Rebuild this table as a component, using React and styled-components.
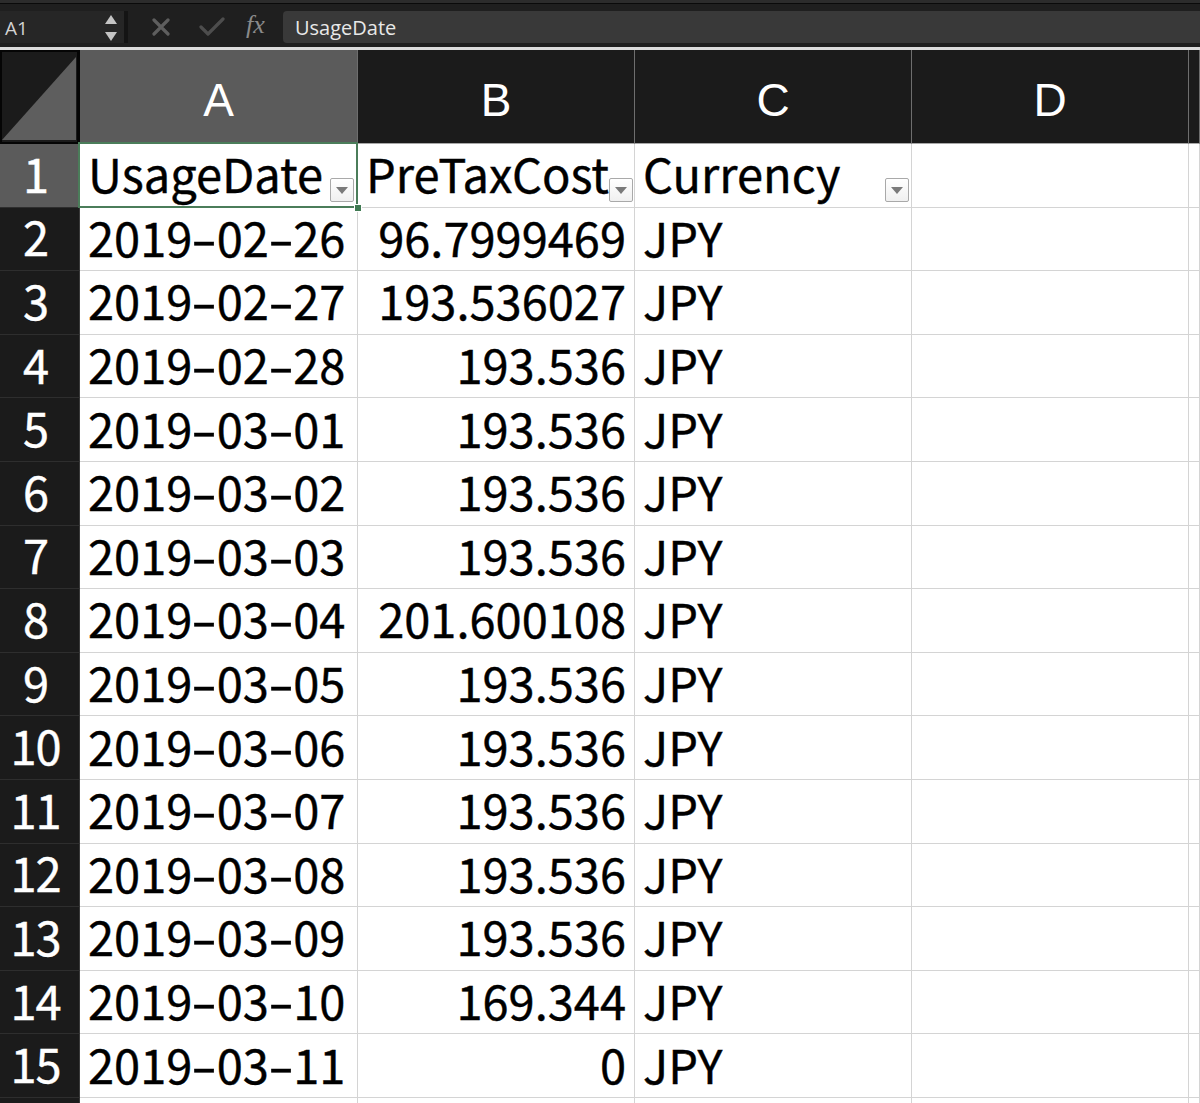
import React from 'react';
import styled, { createGlobalStyle, css } from 'styled-components';

const GlobalStyle = createGlobalStyle`
  html, body {
    margin: 0;
    padding: 0;
    background: #1b1b1b;
    overflow: hidden;
  }
  * {
    box-sizing: border-box;
  }
`;

const Page = styled.div`
  width: 1200px;
  height: 1103px;
  display: flex;
  flex-direction: column;
  overflow: hidden;
  background: #1b1b1b;

  & > * {
    flex-shrink: 0;
  }
`;

const TopStrip = styled.div`
  height: 4px;
  background: #2c2c2c;
  border-bottom: 1px solid #0a0a0a;
`;

const FormulaBar = styled.div`
  height: 43px;
  display: flex;
  align-items: stretch;
  padding: 7px 0 4px;
  background: #1f1f1f;
`;

const NameBox = styled.div`
  width: 124px;
  display: flex;
  align-items: center;
  justify-content: space-between;
  padding: 2px 6px 0 5px;
  background: #262626;
  color: #d2d2d2;
  font-family: 'Open Sans', 'Noto Sans', sans-serif;
  font-size: 19px;
`;

const Divider = styled.div`
  width: 4px;
  background: #141414;
`;

const Tools = styled.div`
  width: 155px;
  display: flex;
  align-items: center;
  padding-left: 24px;
`;

const ToolIcon = styled.span`
  width: 47px;
  display: flex;
  align-items: center;
  justify-content: flex-start;
`;

const Fx = styled.span`
  font-family: 'Liberation Serif', serif;
  font-style: italic;
  font-size: 26px;
  color: #8a8a8a;
  margin-top: -4px;
`;

const FormulaInput = styled.div`
  flex: 1;
  display: flex;
  align-items: center;
  padding-left: 12px;
  background: #393939;
  border-radius: 4px 0 0 4px;
  color: #e8e8e8;
  font-family: 'Open Sans', 'Noto Sans', sans-serif;
  font-size: 20px;
`;

const BarEdge = styled.div`
  height: 3px;
  background: #dcdcdc;
`;

const Sheet = styled.div`
  display: grid;
  grid-template-columns: 80px 278px 277px 277px 277px 1fr;
  grid-template-rows: 94px repeat(16, 63.6px);
`;

const cellFont = css`
  font-family: 'Noto Sans CJK JP', 'Noto Sans', sans-serif;
  line-height: 1;
  -webkit-text-stroke: 0.4px currentColor;
`;

const Corner = styled.div`
  background: #1b1b1b;
  border: 2px solid #050505;
  border-right-width: 3px;
  display: flex;

  svg {
    width: 100%;
    height: 100%;
  }
`;

const ColHeader = styled.div`
  display: flex;
  align-items: center;
  justify-content: center;
  padding-top: 6px;
  background: ${(p) => (p.$selected ? '#5b5b5b' : '#1b1b1b')};
  border-right: 1px solid #6e6e6e;
  border-bottom: 1px solid #a8a8a8;
  color: #ffffff;
  font-family: 'Liberation Sans', Arial, sans-serif;
  font-size: 46px;
`;

const RowHeader = styled.div`
  ${cellFont};
  display: flex;
  align-items: center;
  justify-content: center;
  padding: 0 8px 6px 0;
  background: ${(p) => (p.$selected ? '#5b5b5b' : '#1b1b1b')};
  border-right: 1px solid #3a3a3a;
  border-bottom: 1px solid #2e2e2e;
  color: #ffffff;
  font-size: 47px;
  letter-spacing: -1px;
`;

const Cell = styled.div`
  ${cellFont};
  position: relative;
  display: flex;
  align-items: center;
  justify-content: ${(p) => (p.$right ? 'flex-end' : 'flex-start')};
  padding: 0 ${(p) => (p.$right ? '8px' : '0')} 5px ${(p) => (p.$right ? '0' : '8px')};
  background: #ffffff;
  border-right: 1px solid #d4d4d4;
  border-bottom: 1px solid #d4d4d4;
  color: #000000;
  font-size: 47px;
  white-space: nowrap;

  ${(p) =>
    p.$active &&
    css`
      &::after {
        content: '';
        position: absolute;
        left: -2px;
        top: -2px;
        right: -1px;
        bottom: -1px;
        border: 2px solid #4b7d5a;
        pointer-events: none;
      }
    `}
`;

const Dash = styled.span`
  display: inline-block;
  padding: 0 4px;
  transform: scaleX(1.6);
`;

const FillHandle = styled.span`
  position: absolute;
  right: -5px;
  bottom: -5px;
  width: 8px;
  height: 8px;
  background: #3f7a52;
  border: 1px solid #ffffff;
  z-index: 2;
`;

const FilterButton = styled.span`
  position: absolute;
  right: ${(p) => p.$right}px;
  bottom: 5px;
  width: 24px;
  height: 24px;
  display: flex;
  align-items: center;
  justify-content: center;
  background: linear-gradient(#ffffff, #f0f0f0);
  border: 1px solid #a9a9a9;
  border-radius: 2px;
  z-index: 1;

  &::before {
    content: '';
    width: 0;
    height: 0;
    margin-top: 2px;
    border-left: 6px solid transparent;
    border-right: 6px solid transparent;
    border-top: 7px solid #7a7a7a;
  }
`;

const Spinner = () => (
  <svg width="14" height="28" viewBox="0 0 14 28">
    <path d="M7 1 L13 10 L1 10 Z" fill="#c4c4c4" />
    <path d="M1 18 L13 18 L7 27 Z" fill="#c4c4c4" />
  </svg>
);

const CancelIcon = () => (
  <svg width="18" height="18" viewBox="0 0 18 18">
    <path d="M2 2 L16 16 M16 2 L2 16" stroke="#5e5e5e" strokeWidth="3.2" strokeLinecap="round" />
  </svg>
);

const EnterIcon = () => (
  <svg width="26" height="20" viewBox="0 0 26 20">
    <path d="M2 10 L9 17 L24 2" stroke="#4d4d4d" strokeWidth="3.2" fill="none" strokeLinecap="round" strokeLinejoin="round" />
  </svg>
);

const CornerTriangle = () => (
  <svg viewBox="0 0 75 88" preserveAspectRatio="none">
    <path d="M0 86 L74 5 L74 86 Z" fill="#5e5e5e" />
  </svg>
);

const DateText = ({ value }) => {
  const parts = value.split('-');
  return parts.map((part, i) => (
    <React.Fragment key={i}>
      {i > 0 && <Dash>-</Dash>}
      {part}
    </React.Fragment>
  ));
};

const columns = ['A', 'B', 'C', 'D', ''];

const rows = [
  ['2019-02-26', '96.7999469'],
  ['2019-02-27', '193.536027'],
  ['2019-02-28', '193.536'],
  ['2019-03-01', '193.536'],
  ['2019-03-02', '193.536'],
  ['2019-03-03', '193.536'],
  ['2019-03-04', '201.600108'],
  ['2019-03-05', '193.536'],
  ['2019-03-06', '193.536'],
  ['2019-03-07', '193.536'],
  ['2019-03-08', '193.536'],
  ['2019-03-09', '193.536'],
  ['2019-03-10', '169.344'],
  ['2019-03-11', '0'],
];

const App = () => {
  return (
    <Page>
      <GlobalStyle />
      <TopStrip />
      <FormulaBar>
        <NameBox>
          A1
          <Spinner />
        </NameBox>
        <Divider />
        <Tools>
          <ToolIcon>
            <CancelIcon />
          </ToolIcon>
          <ToolIcon>
            <EnterIcon />
          </ToolIcon>
          <Fx>fx</Fx>
        </Tools>
        <FormulaInput>UsageDate</FormulaInput>
      </FormulaBar>
      <BarEdge />
      <Sheet>
        <Corner>
          <CornerTriangle />
        </Corner>
        {columns.map((c, i) => (
          <ColHeader key={c || 'e'} $selected={i === 0}>
            {c}
          </ColHeader>
        ))}

        <RowHeader $selected>1</RowHeader>
        <Cell $active>
          UsageDate
          <FilterButton $right={3} />
          <FillHandle />
        </Cell>
        <Cell>
          PreTaxCost
          <FilterButton $right={1} />
        </Cell>
        <Cell>
          Currency
          <FilterButton $right={2} />
        </Cell>
        <Cell />
        <Cell />

        {rows.map(([date, cost], i) => (
          <React.Fragment key={date}>
            <RowHeader>{i + 2}</RowHeader>
            <Cell>
              <DateText value={date} />
            </Cell>
            <Cell $right>{cost}</Cell>
            <Cell>JPY</Cell>
            <Cell />
            <Cell />
          </React.Fragment>
        ))}

        <RowHeader />
        <Cell />
        <Cell />
        <Cell />
        <Cell />
        <Cell />
      </Sheet>
    </Page>
  );
};

export default App;
